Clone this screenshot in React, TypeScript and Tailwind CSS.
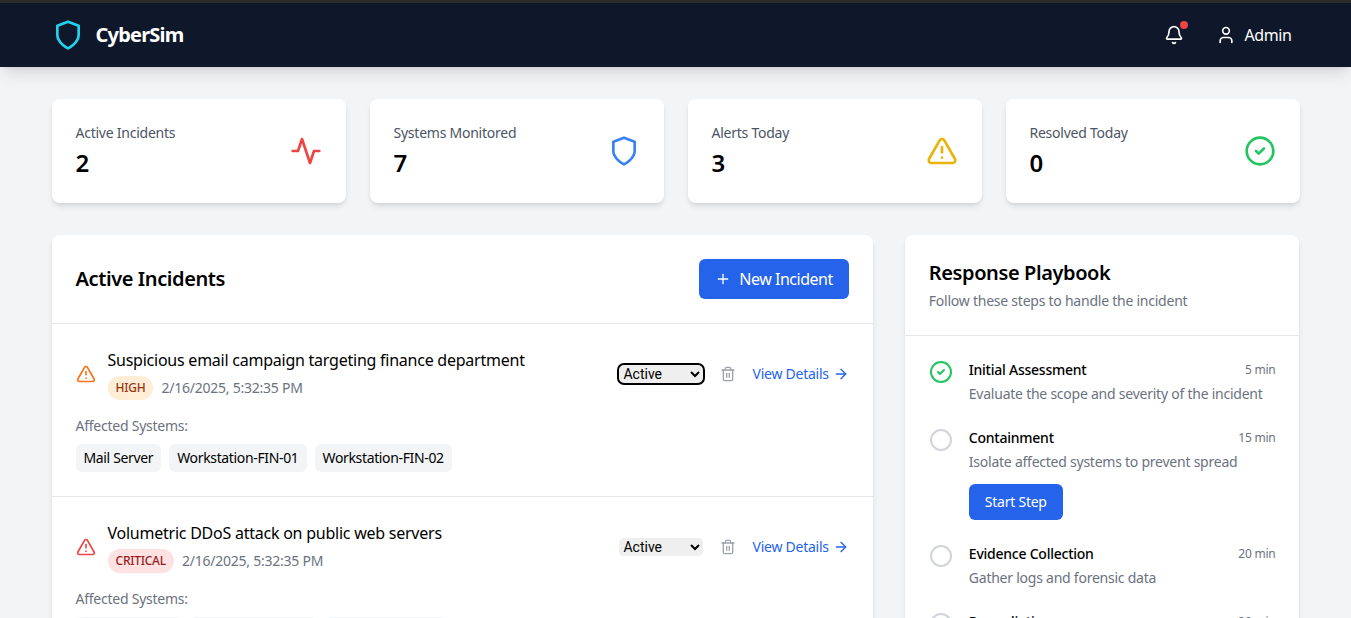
import React from 'react';
import { AlertTriangle, ArrowRight, Bell, Circle, CircleCheck, Plus, Trash2, User } from 'lucide-react';

function ShieldIcon({ className }: { className: string }) {
  return (
    <svg viewBox="0 0 24 24" fill="none" stroke="currentColor" strokeWidth={2} strokeLinecap="round" strokeLinejoin="round" className={className}>
      <path d="M12 22s8-4 8-10V5l-8-3-8 3v7c0 6 8 10 8 10z" />
    </svg>
  );
}

function ActivityIcon({ className }: { className: string }) {
  return (
    <svg viewBox="0 0 24 24" fill="none" stroke="currentColor" strokeWidth={2} strokeLinecap="round" strokeLinejoin="round" className={className}>
      <polyline points="22 12 18 12 15 21 9 3 6 12 2 12" />
    </svg>
  );
}

const stats = [
  { label: 'Active Incidents', value: '2', icon: <ActivityIcon className="w-8 h-8 text-[#ef4444]" /> },
  { label: 'Systems Monitored', value: '7', icon: <ShieldIcon className="w-8 h-8 text-[#3b82f6]" /> },
  { label: 'Alerts Today', value: '3', icon: <AlertTriangle className="w-8 h-8 text-[#eab308]" /> },
  { label: 'Resolved Today', value: '0', icon: <CircleCheck className="w-8 h-8 text-[#22c55e]" /> },
];

const incidents = [
  {
    title: 'Suspicious email campaign targeting finance department',
    severity: 'HIGH',
    badge: 'bg-[#ffedd5] text-[#9a3412]',
    iconColor: 'text-[#f97316]',
    focused: true,
    systems: ['Mail Server', 'Workstation-FIN-01', 'Workstation-FIN-02'],
  },
  {
    title: 'Volumetric DDoS attack on public web servers',
    severity: 'CRITICAL',
    badge: 'bg-[#fee2e2] text-[#991b1b]',
    iconColor: 'text-[#ef4444]',
    focused: false,
    systems: ['Web-Server-01', 'Load-Balancer-01', 'CDN-Gateway-01'],
  },
];

const steps = [
  { title: 'Initial Assessment', time: '5 min', text: 'Evaluate the scope and severity of the incident', done: true },
  { title: 'Containment', time: '15 min', text: 'Isolate affected systems to prevent spread', action: true },
  { title: 'Evidence Collection', time: '20 min', text: 'Gather logs and forensic data' },
  { title: 'Remediation', time: '30 min', text: 'Remove the threat from affected systems' },
];

export default function App() {
  return (
    <div className="h-screen overflow-hidden bg-[#f3f4f6] font-['Noto_Sans',sans-serif] tracking-[-0.015em] text-black">
      {/* Header */}
      <header className="bg-[#0f172a] border-t-[3px] border-[#2b2b2b] shadow-lg relative">
        <div className="max-w-7xl mx-auto px-4 h-16 flex items-center justify-between">
          <div className="flex items-center gap-3">
            <ShieldIcon className="w-8 h-8 text-[#22d3ee]" />
            <span className="text-xl font-bold tracking-[-0.04em] text-white">CyberSim</span>
          </div>
          <div className="flex items-center gap-8 pr-2">
            <div className="relative">
              <Bell className="w-5 h-5 text-white" />
              <span className="absolute -top-1 -right-1 w-2 h-2 rounded-full bg-[#ef4444]" />
            </div>
            <div className="flex items-center gap-2 text-white">
              <User className="w-5 h-5" />
              <span className="tracking-[-0.025em]">Admin</span>
            </div>
          </div>
        </div>
      </header>

      <main className="max-w-7xl mx-auto px-4 py-8">
        {/* Stats */}
        <div className="grid grid-cols-4 gap-6 mb-8">
          {stats.map((s) => (
            <div key={s.label} className="bg-white rounded-lg shadow-md p-6 flex items-center justify-between">
              <div>
                <p className="text-sm text-[#4b5563]">{s.label}</p>
                <p className="text-2xl font-semibold mt-1">{s.value}</p>
              </div>
              {s.icon}
            </div>
          ))}
        </div>

        <div className="grid grid-cols-3 gap-8">
          {/* Incidents */}
          <div className="col-span-2 bg-white rounded-lg shadow-md">
            <div className="p-6 flex items-center justify-between border-b border-[#e5e7eb]">
              <h2 className="text-xl font-semibold tracking-[-0.02em]">Active Incidents</h2>
              <button className="flex items-center gap-2 bg-[#2563eb] text-white px-4 py-2 rounded-md tracking-[-0.03em]">
                <Plus className="w-4 h-4" />
                New Incident
              </button>
            </div>
            {incidents.map((inc) => (
              <div key={inc.title} className="p-6 border-b border-[#e5e7eb]">
                <div className="flex items-center justify-between">
                  <div className="flex items-center gap-3">
                    <AlertTriangle className={`w-5 h-5 ${inc.iconColor}`} />
                    <div>
                      <h3>{inc.title}</h3>
                      <div className="flex items-center gap-2 mt-1">
                        <span className={`px-2 py-1 rounded-full text-xs font-medium ${inc.badge}`}>{inc.severity}</span>
                        <span className="text-sm text-[#6b7280]">2/16/2025, 5:32:35 PM</span>
                      </div>
                    </div>
                  </div>
                  <div className="flex items-center gap-4">
                    <select
                      defaultValue="Active"
                      className={`w-[86px] h-5 rounded-md bg-[#efefef] font-['Roboto',sans-serif] tracking-normal text-sm border border-white ${inc.focused ? 'outline-2 -outline-offset-1 outline-black' : ''}`}
                    >
                      <option>Active</option>
                      <option>Resolved</option>
                    </select>
                    <Trash2 className="w-4 h-4 text-[#9ca3af]" />
                    <span className="flex items-center gap-1 text-sm text-[#2563eb]">
                      View Details
                      <ArrowRight className="w-4 h-4" />
                    </span>
                  </div>
                </div>
                <p className="text-sm text-[#6b7280] mt-4 mb-2">Affected Systems:</p>
                <div className="flex gap-2">
                  {inc.systems.map((sys) => (
                    <span key={sys} className="px-2 py-1 bg-[#f3f4f6] rounded-md text-sm tracking-[-0.025em]">{sys}</span>
                  ))}
                </div>
              </div>
            ))}
          </div>

          {/* Playbook */}
          <div className="bg-white rounded-lg shadow-md self-start">
            <div className="p-6 border-b border-[#e5e7eb]">
              <h2 className="text-xl font-semibold tracking-[-0.02em]">Response Playbook</h2>
              <p className="text-sm text-[#6b7280] mt-1">Follow these steps to handle the incident</p>
            </div>
            <div className="p-6 space-y-6">
              {steps.map((st) => (
                <div key={st.title} className="flex gap-4">
                  {st.done ? (
                    <CircleCheck className="w-6 h-6 text-[#22c55e] shrink-0" />
                  ) : (
                    <Circle className="w-6 h-6 text-[#d1d5db] shrink-0" />
                  )}
                  <div className="flex-1">
                    <div className="flex items-center justify-between">
                      <h3 className="text-sm font-medium">{st.title}</h3>
                      <span className="text-xs text-[#6b7280]">{st.time}</span>
                    </div>
                    <p className="text-sm text-[#6b7280] mt-1">{st.text}</p>
                    {st.action && (
                      <button className="mt-3 px-4 py-2 bg-[#2563eb] text-white text-sm rounded-md">Start Step</button>
                    )}
                  </div>
                </div>
              ))}
            </div>
          </div>
        </div>
      </main>
    </div>
  );
}
